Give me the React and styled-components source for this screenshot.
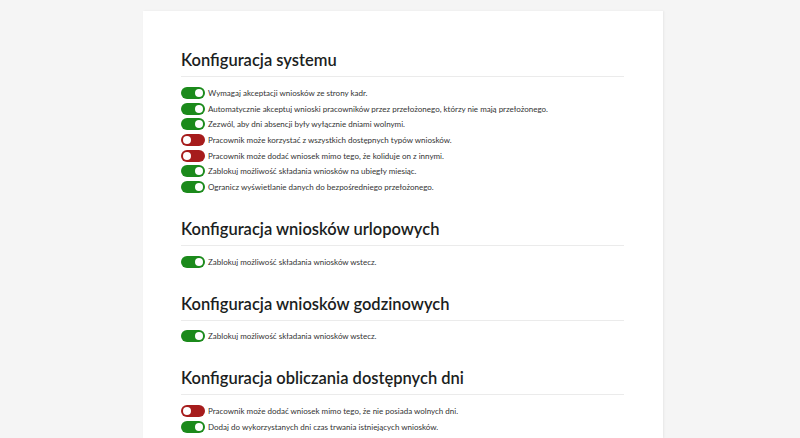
import styled, { createGlobalStyle } from "styled-components";

const GlobalStyle = createGlobalStyle`
    html, body {
        margin: 0;
        padding: 0;
        background-color: #f5f5f5;
        font-family: Lato, "Open Sans", sans-serif;
        color: #212529;
    }
`;

const Page = styled.div`
    display: flex;
    justify-content: flex-start;
    padding: 11px 0 0 143px;
    height: 438px;
    box-sizing: border-box;
    overflow: hidden;
`;

const Card = styled.div`
    width: 520px;
    background-color: #fff;
    box-shadow: 1px 0 2px rgba(0, 0, 0, 0.06);
    padding: 36px 39px 20px 38px;
    box-sizing: border-box;
`;

const Section = styled.div`
    margin-bottom: 21px;
`;

const Heading = styled.h2`
    font-size: 16.5px;
    font-weight: 600;
    margin: 0;
    line-height: 26px;
    color: #1b1e21;
    padding-bottom: 3px;
    border-bottom: 1px solid #ebebeb;
    margin-bottom: 8px;
`;

const Row = styled.div`
    display: flex;
    align-items: center;
    height: 15.7px;
    font-size: 8px;
    color: #333;
`;

const Toggle = styled.span`
    position: relative;
    width: 24px;
    height: 12px;
    border-radius: 6px;
    background-color: ${props => props.$on ? "#1b8a1b" : "#a61c1c"};
    margin-right: 3px;
    flex-shrink: 0;

    &::after {
        content: "";
        position: absolute;
        top: 2px;
        left: ${props => props.$on ? "14px" : "2px"};
        width: 8px;
        height: 8px;
        border-radius: 50%;
        background-color: #fff;
    }
`;

const sections = [
    {
        title: "Konfiguracja systemu",
        items: [
            [true, "Wymagaj akceptacji wniosków ze strony kadr."],
            [true, "Automatycznie akceptuj wnioski pracowników przez przełożonego, którzy nie mają przełożonego."],
            [true, "Zezwól, aby dni absencji były wyłącznie dniami wolnymi."],
            [false, "Pracownik może korzystać z wszystkich dostępnych typów wniosków."],
            [false, "Pracownik może dodać wniosek mimo tego, że koliduje on z innymi."],
            [true, "Zablokuj możliwość składania wniosków na ubiegły miesiąc."],
            [true, "Ogranicz wyświetlanie danych do bezpośredniego przełożonego."],
        ],
    },
    {
        title: "Konfiguracja wniosków urlopowych",
        items: [[true, "Zablokuj możliwość składania wniosków wstecz."]],
    },
    {
        title: "Konfiguracja wniosków godzinowych",
        items: [[true, "Zablokuj możliwość składania wniosków wstecz."]],
    },
    {
        title: "Konfiguracja obliczania dostępnych dni",
        items: [
            [false, "Pracownik może dodać wniosek mimo tego, że nie posiada wolnych dni."],
            [true, "Dodaj do wykorzystanych dni czas trwania istniejących wniosków."],
        ],
    },
];

export default function App() {
    return (<>
    <GlobalStyle />
    <Page>
        <Card>
            {sections.map(s => (
                <Section key={s.title}>
                    <Heading>{s.title}</Heading>
                    {s.items.map(([on, text]) => (
                        <Row key={text}>
                            <Toggle $on={on} />
                            {text}
                        </Row>
                    ))}
                </Section>
            ))}
        </Card>
    </Page>
    </>);
}
